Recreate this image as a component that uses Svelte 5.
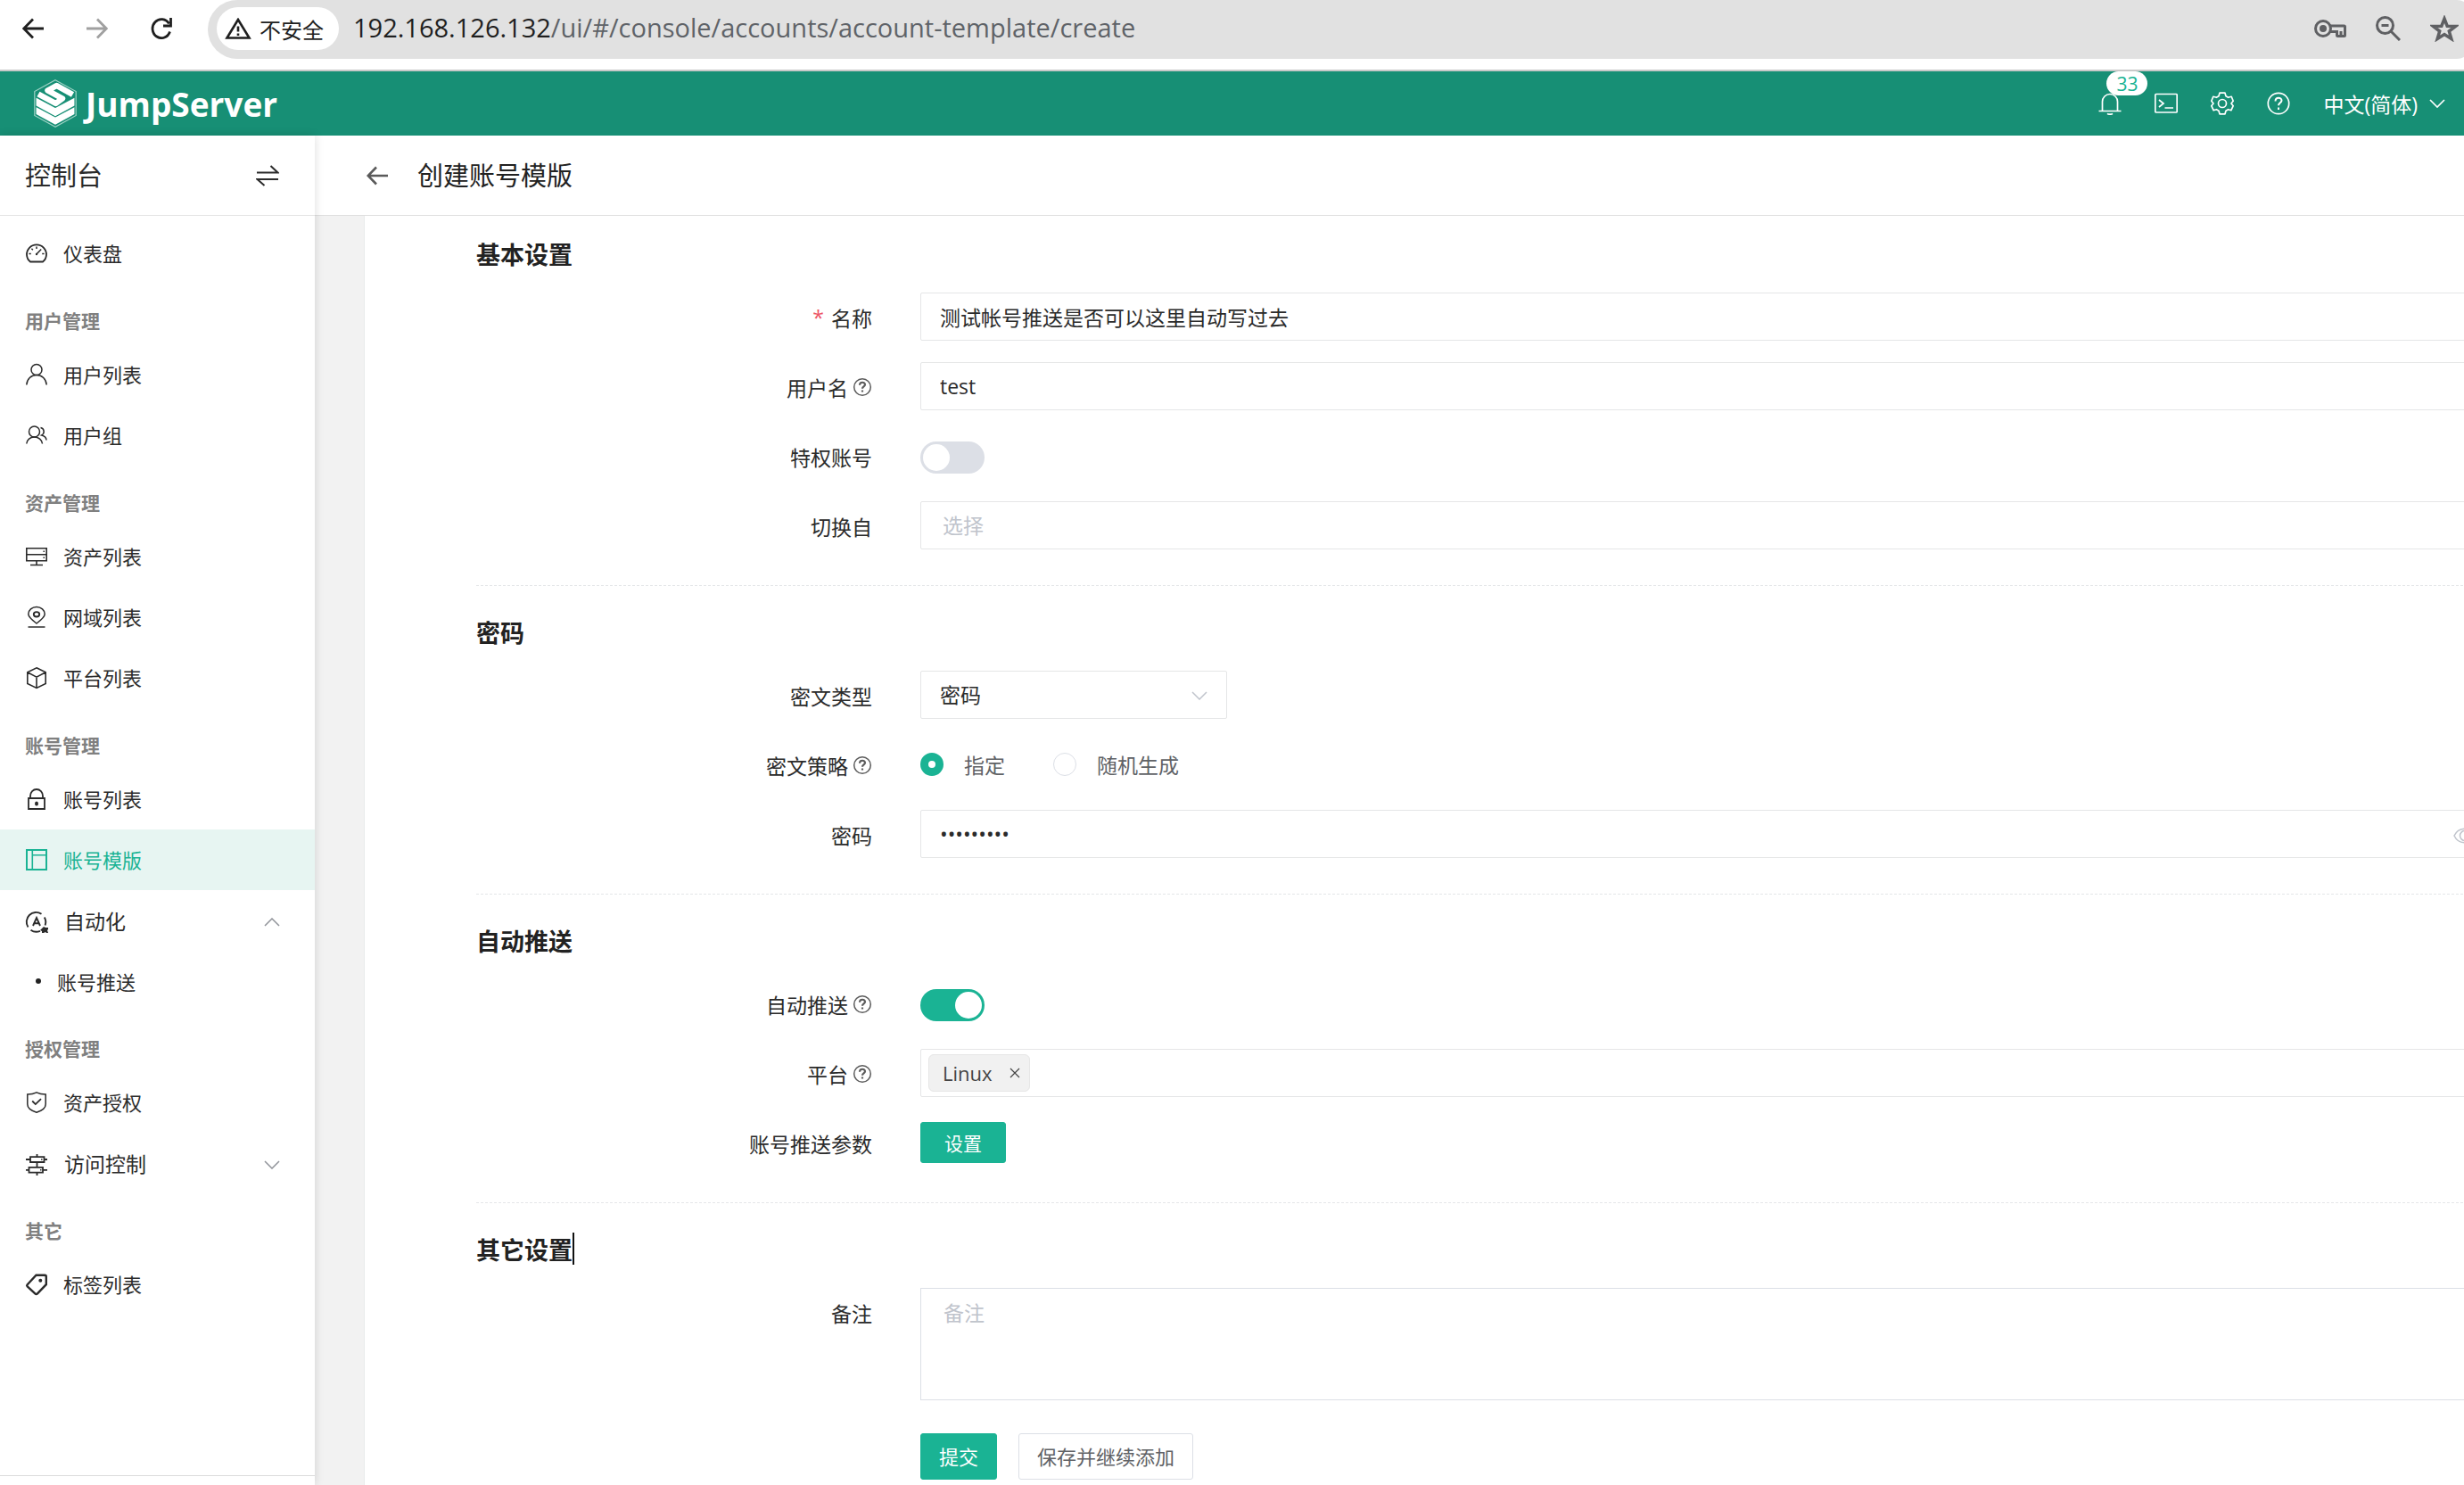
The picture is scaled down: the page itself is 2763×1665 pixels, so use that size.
<script>
  let name = $state('测试帐号推送是否可以这里自动写过去');
  let username = $state('test');
  let privileged = $state(false);
  let suFrom = $state('');
  let secretType = $state('password');
  let strategy = $state('specific');
  let secret = $state('password1');
  let autoPush = $state(true);
  let platforms = $state(['Linux']);
  let comment = $state('');

  const menu = [
    { type: 'item', icon: 'gauge', text: '仪表盘' },
    { type: 'group', text: '用户管理' },
    { type: 'item', icon: 'user', text: '用户列表' },
    { type: 'item', icon: 'users', text: '用户组' },
    { type: 'group', text: '资产管理' },
    { type: 'item', icon: 'server', text: '资产列表' },
    { type: 'item', icon: 'pin', text: '网域列表' },
    { type: 'item', icon: 'cube', text: '平台列表' },
    { type: 'group', text: '账号管理' },
    { type: 'item', icon: 'lock', text: '账号列表' },
    { type: 'item', icon: 'template', text: '账号模版', active: true },
    { type: 'sub', icon: 'auto', text: '自动化', open: true },
    { type: 'child', text: '账号推送' },
    { type: 'group', text: '授权管理' },
    { type: 'item', icon: 'shield', text: '资产授权' },
    { type: 'sub', icon: 'access', text: '访问控制', open: false },
    { type: 'group', text: '其它' },
    { type: 'item', icon: 'tag', text: '标签列表' },
  ];
</script>

{#snippet menuIcon(kind)}
  <svg class="menu-icon" viewBox="0 0 24 24" aria-hidden="true">
    {#if kind === 'gauge'}
      <path d="M5 21.5A11 10.8 0 1 1 19 21.5Z" stroke-width="1.8" />
      <path d="M12 4.5v2.5M6.4 6.8l1.5 1.5M3.4 12.5h2.4M18.2 12.5h2.4M12.4 12.6l4.8-5" />
      <circle cx="12" cy="13" r="1.2" class="solid" />
    {:else if kind === 'user'}
      <circle cx="12" cy="6.5" r="6" />
      <path d="M.8 23.5c.4-6.500 5.200-11 11.200-11s10.800 4.500 11.200 11" />
    {:else if kind === 'users'}
      <circle cx="9.500" cy="8" r="6" />
      <path d="M.8 21.500c.3-4.500 4-7.500 8.700-7.500s8.600 3 9 7.500M16.500 3.500c4 .5 5.200 6.500 1.200 8.500 3 .8 5.200 3 5.300 5.500" />
    {:else if kind === 'server'}
      <path d="M.8 2.800h22.400v14H.8zM.8 9.800h22.400M12 16.800v5.500M5 21.500h14" stroke-width="1.600" />
      <path d="M19.500 6.300h1.500M19.500 13.300h1.500" />
    {:else if kind === 'pin'}
      <path d="M12 19C6 14.500 2.800 11.500 2.800 8.500a9.200 8 0 0 1 18.400 0c0 3-3.200 6-9.200 10.500z" />
      <ellipse cx="12" cy="8.800" rx="3.200" ry="2.700" stroke-width="1.900" />
      <path d="M2.500 23h19" />
    {:else if kind === 'cube'}
      <path d="M12 .8l10.200 5v12.600L12 23.400 1.800 18.400V5.800zM1.800 5.800L12 11.200l10.200-5.400M12 11.200v12.200" stroke-width="1.600" />
    {:else if kind === 'lock'}
      <path d="M3 11h18v12H3zM5 11V8.500a7 7.500 0 0 1 14 0V11" stroke-width="1.800" />
      <ellipse cx="12" cy="17" rx="2" ry="2.500" class="solid" />
    {:else if kind === 'template'}
      <path d="M1 1h22v22H1z" stroke-width="2" />
      <path d="M7.300 1v22M7.300 6.800H23" stroke-width="1.600" />
    {:else if kind === 'auto'}
      <path d="M2.500 17.500A10.700 10.700 0 0 1 17.500 2.800M20.800 6.500a10.700 10.700 0 0 1 .8 9M5.500 20.800a10.700 10.700 0 0 0 10.500 1" stroke-width="1.900" />
      <path d="M8 16l4-9 4 9M9.300 13.200h5.400" stroke-width="1.900" />
      <path d="M16 21l4-4 2 1h3v2l-1 1 1 3h-2l-1-1-2 1h-2v-2z" class="solid" />
    {:else if kind === 'shield'}
      <path d="M12 .8c3.200 1.600 6.500 2.200 10.200 2.200v11c0 4.200-4.500 7.500-10.200 9.200C6.300 21.500 1.800 18.200 1.800 14V3C5.500 3 8.800 2.400 12 .8z" />
      <path d="M7.200 10.500l3.600 3.600 6.200-6" stroke-width="1.800" />
    {:else if kind === 'access'}
      <path d="M5 3.200h15.500v5.800H5zM3.500 14.800H19v5.800H3.500zM0 6h5M20.500 6H24M0 17.800h3.500M19 17.800h5M12.500 0v3.200M12.500 9v5.800M12.500 20.600V24" stroke-width="1.800" />
      <path d="M17 6h1.500M16 17.800h1.500" />
    {:else if kind === 'tag'}
      <path d="M1.500 12.500L11.500 1.800h9.700c1 0 1.600.6 1.600 1.600v8.800L13 22.400c-.8.8-1.900.8-2.700 0L1.700 14.500c-.6-.6-.7-1.400-.2-2z" stroke-width="2.400" />
      <circle cx="16.300" cy="7.800" r="2" class="solid" />
    {/if}
  </svg>
{/snippet}

{#snippet help(text)}
  <svg class="help" viewBox="0 0 22 22" role="img" aria-label={text}>
    <circle cx="11" cy="11" r="9.300" />
    <path d="M8 8.800c0-4 6-4 6-.5 0 2-3 2.200-3 4.400M11 14.500v2" stroke-width="2.200" />
  </svg>
{/snippet}

<div class="window">
  <div class="browser">
    <button class="nav" aria-label="后退">
      <svg viewBox="0 0 24 24"><path d="M24 12H2M12 1.500L1.700 12 12 22.500" /></svg>
    </button>
    <button class="nav off" aria-label="前进">
      <svg viewBox="0 0 24 24"><path d="M0 12h22M12 1.500L22.300 12 12 22.500" /></svg>
    </button>
    <button class="nav" aria-label="刷新">
      <svg viewBox="0 0 24 24"><path d="M21.500 15.500A10 10.500 0 1 1 20.500 6.500M22.500 0v9h-8.500" /></svg>
    </button>
    <div class="address">
      <button class="chip">
        <svg viewBox="0 0 30 24" aria-hidden="true"><path d="M15 2L2.500 22.500h25z" /><path d="M15 9.500v6M15 17.500v2.500" /></svg>
        不安全
      </button>
      <span class="url"><b>192.168.126.132</b>/ui/#/console/accounts/account-template/create</span>
      <div class="tools">
        <button aria-label="密码">
          <svg width="36" height="24" viewBox="0 0 36 24"><circle cx="10" cy="12" r="8.500" /><circle cx="10" cy="12" r="4" class="fill" /><path d="M18 9h15.500c.8 0 1 .4 1 1v9.500c0 .8-.4 1-1 1h-7c-.6 0-1-.3-1-1V15.500H18M30 15v5" /></svg>
        </button>
        <button aria-label="缩放">
          <svg width="28" height="28" viewBox="0 0 28 28"><circle cx="10.500" cy="10.500" r="9" /><path d="M17 17l10 10M6.500 10.500h8" /></svg>
        </button>
        <button aria-label="收藏">
          <svg width="32" height="30" viewBox="0 0 32 30"><path d="M16 4l3.200 8.200 9.300.3-7.200 5.500 2.500 8.500L16 21.600 8.200 26.500l2.500-8.500-7.200-5.500 9.300-.3z" stroke-width="3.500" /></svg>
        </button>
      </div>
    </div>
  </div>

  <header class="topbar">
    <a class="brand" href="#/">
      <svg viewBox="0 0 48 54" aria-hidden="true">
        <path d="M24 .8L47.200 13.500v27L24 53.200.8 40.500v-27z" stroke="#9ed2c5" stroke-width="1.200" />
        <path d="M43.500 17L25.500 7 15.500 12.500 32 21.500 24.500 27 5 16.500" stroke="#fff" stroke-width="6.500" stroke-linejoin="round" />
        <path d="M3.300 22L24 33l20.700-11v7L24 40.500 3.300 29zM3.300 32.500L24 43.500l20.700-11v6L24 50 3.300 38.500z" fill="#fff" />
      </svg>
      <span>JumpServer</span>
    </a>
    <nav class="actions" aria-label="工具">
      <button class="bell" aria-label="消息">
        <svg viewBox="0 0 26 26"><path d="M4.500 21.500V11a8.500 8.500 0 0 1 17 0v10.500M.5 21.500h25M10 24.300c1.500 1.200 4.500 1.200 6 0" /></svg>
        <span class="badge">33</span>
      </button>
      <button aria-label="终端">
        <svg viewBox="0 0 26 26"><rect x=".8" y="2.500" width="24.400" height="20.500" rx="1" /><path d="M5 9l5 4-5 4M11.500 18H21" /></svg>
      </button>
      <button aria-label="设置">
        <svg viewBox="0 0 26 26"><circle cx="13" cy="13" r="4.500" /><path d="M10 1.200h6l1 3.600 2.600 1.500 3.600-1 2 5-2.200 2.700 2.200 2.700-2.300 5-3.300-1-2.600 1.500-1 3.600h-6l-1-3.600-2.600-1.500-3.300 1-2.300-5L3 13 .8 10.300l2-5 3.600 1L9 4.800z" stroke-linejoin="round" /></svg>
      </button>
      <button aria-label="帮助">
        <svg viewBox="0 0 26 26"><circle cx="13" cy="13" r="11.700" /><path d="M9.500 10.500c0-5 7-4.500 7-.8 0 2.500-3.500 2.800-3.500 5.600M13 17.500v2.500" stroke-width="2" /></svg>
      </button>
      <button class="lang">
        中文(简体)
        <svg class="chev" viewBox="0 0 18 10"><path d="M1 1l8 8 8-8" /></svg>
      </button>
    </nav>
  </header>

  <div class="shell">
    <aside class="sidebar">
      <div class="side-head">
        <span>控制台</span>
        <button aria-label="切换视图">
          <svg viewBox="0 0 26 26"><path d="M1 9.500h23.500L16.500 2M25 17H1.500l8 7" /></svg>
        </button>
      </div>
      <nav class="menu" aria-label="控制台">
        {#each menu as m}
          {#if m.type === 'group'}
            <div class="group">{m.text}</div>
          {:else if m.type === 'sub'}
            <button class="entry sub" aria-expanded={m.open}>
              {@render menuIcon(m.icon)}
              <span>{m.text}</span>
              <svg class="arrow" class:open={m.open} viewBox="0 0 18 10"><path d="M1 1l8 8 8-8" /></svg>
            </button>
          {:else if m.type === 'child'}
            <a class="entry child" href="#/push"><i></i>{m.text}</a>
          {:else}
            <a class="entry" class:active={m.active} href="#/menu">
              {@render menuIcon(m.icon)}
              <span>{m.text}</span>
            </a>
          {/if}
        {/each}
      </nav>
      <div class="side-foot"></div>
    </aside>

    <main>
      <div class="page-head">
        <button aria-label="返回">
          <svg viewBox="0 0 24 24"><path d="M24 12H2M11 2.500L1.700 12 11 21.500" /></svg>
        </button>
        <h1>创建账号模版</h1>
      </div>
      <div class="card">
        <form onsubmit={(e) => e.preventDefault()}>
          <section>
            <h2>基本设置</h2>
            <div class="row">
              <label for="name"><em>*</em>名称</label>
              <input id="name" class="box" type="text" bind:value={name} />
            </div>
            <div class="row">
              <label for="username">用户名{@render help('用户名说明')}</label>
              <input id="username" class="box" type="text" bind:value={username} />
            </div>
            <div class="row">
              <label for="privileged">特权账号</label>
              <input id="privileged" class="switch" type="checkbox" bind:checked={privileged} />
            </div>
            <div class="row">
              <label for="su">切换自</label>
              <select id="su" class="box empty" bind:value={suFrom}><option value="">选择</option></select>
            </div>
          </section>

          <section>
            <h2>密码</h2>
            <div class="row">
              <label for="type">密文类型</label>
              <div class="select">
                <select id="type" class="box" bind:value={secretType}><option value="password">密码</option></select>
                <svg class="chev" viewBox="0 0 18 10" aria-hidden="true"><path d="M1 1l8 8 8-8" /></svg>
              </div>
            </div>
            <div class="row">
              <span class="label" id="strategy">密文策略{@render help('密文策略说明')}</span>
              <div class="radios" role="radiogroup" aria-labelledby="strategy">
                <label><input type="radio" name="strategy" value="specific" bind:group={strategy} />指定</label>
                <label><input type="radio" name="strategy" value="random" bind:group={strategy} />随机生成</label>
              </div>
            </div>
            <div class="row">
              <label for="secret">密码</label>
              <div class="secret">
                <input id="secret" class="box" type="password" bind:value={secret} />
                <button type="button" aria-label="显示密码">
                  <svg viewBox="0 0 26 18"><path d="M1 9c5-10.500 19-10.500 24 0-5 10.500-19 10.500-24 0z" /><circle cx="13" cy="9" r="5.500" /></svg>
                </button>
              </div>
            </div>
          </section>

          <section>
            <h2>自动推送</h2>
            <div class="row">
              <label for="push">自动推送{@render help('自动推送说明')}</label>
              <input id="push" class="switch" type="checkbox" bind:checked={autoPush} />
            </div>
            <div class="row">
              <label for="platform">平台{@render help('平台说明')}</label>
              <div class="box tags">
                {#each platforms as p}
                  <span class="tag">{p}
                    <button type="button" aria-label="移除 {p}" onclick={() => (platforms = platforms.filter((x) => x !== p))}>
                      <svg viewBox="0 0 12 12"><path d="M1 1l10 10M11 1L1 11" /></svg>
                    </button>
                  </span>
                {/each}
                <input id="platform" type="text" />
              </div>
            </div>
            <div class="row">
              <label for="params">账号推送参数</label>
              <button id="params" type="button" class="btn primary small">设置</button>
            </div>
          </section>

          <section>
            <h2>其它设置<span class="caret"></span></h2>
            <div class="row">
              <label for="comment">备注</label>
              <textarea id="comment" placeholder="备注" bind:value={comment}></textarea>
            </div>
            <div class="row submit">
              <div class="buttons">
                <button type="submit" class="btn primary">提交</button>
                <button type="button" class="btn">保存并继续添加</button>
              </div>
            </div>
          </section>
        </form>
      </div>
    </main>
  </div>
</div>

<style>
  :global(body) {
    margin: 0;
    background: #fff;
  }
  .window {
    display: flex;
    flex-direction: column;
    height: 100vh;
    overflow: hidden;
    font-family: 'Open Sans', 'Noto Sans CJK SC', sans-serif;
    font-size: 23px;
    color: #2b2b2b;
  }
  .window :is(button, input, select, textarea) {
    font: inherit;
    color: inherit;
    box-sizing: border-box;
    margin: 0;
  }
  button {
    padding: 0;
    border: 0;
    background: none;
    display: flex;
    align-items: center;
    cursor: pointer;
  }
  a {
    color: inherit;
    text-decoration: none;
  }
  svg {
    display: block;
    flex: none;
    fill: none;
    stroke: currentColor;
    stroke-width: 1.5;
  }

  /* browser toolbar */
  .browser {
    display: flex;
    align-items: flex-start;
    flex: none;
    height: 78px;
    padding-left: 25px;
    border-bottom: 2px solid #c9c9c9;
    overflow: hidden;
  }
  .window .nav {
    flex: none;
    height: 64px;
    margin-right: 48px;
    color: #1f1f1f;
  }
  .nav svg {
    width: 24px;
    height: 24px;
    stroke-width: 2.8;
  }
  .window .nav.off {
    color: #a0a0a0;
  }
  .window .nav:nth-child(3) {
    margin-right: 40px;
  }
  .address {
    flex: 1;
    display: flex;
    align-items: center;
    box-sizing: border-box;
    height: 66px;
    margin-right: -8px;
    padding: 0 14px 2px 10px;
    border-radius: 33px 16px 16px 33px;
    background: #e1e1e1;
  }
  .window .chip {
    flex: none;
    gap: 9px;
    height: 48px;
    padding: 0 17px 0 9px;
    border-radius: 24px;
    background: #fff;
    font-size: 24px;
    color: #1f1f1f;
  }
  .chip svg {
    width: 30px;
    height: 24px;
    stroke-width: 2.6;
  }
  .url {
    flex: 1;
    margin-left: 16px;
    padding-bottom: 2px;
    font-size: 29px;
    line-height: 62px;
    white-space: nowrap;
    color: #5f6368;
  }
  .url b {
    font-weight: 400;
    color: #1f1f1f;
  }
  .tools {
    display: flex;
    align-items: center;
    gap: 33px;
    color: #5f6063;
  }
  .tools svg {
    stroke-width: 3;
  }
  .tools .fill {
    fill: currentColor;
    stroke: none;
  }

  /* product header */
  .topbar {
    display: flex;
    justify-content: space-between;
    flex: none;
    height: 72px;
    padding: 0 21px 0 38px;
    background: #178f75;
    color: #fff;
  }
  .brand {
    display: flex;
    align-items: center;
    gap: 10px;
    font-size: 37px;
    font-weight: 700;
  }
  .brand svg {
    width: 48px;
    height: 54px;
  }
  .actions {
    display: flex;
    align-items: center;
    gap: 37px;
  }
  .actions svg {
    width: 26px;
    height: 26px;
    stroke-width: 1.7;
  }
  .bell {
    position: relative;
  }
  .badge {
    position: absolute;
    left: 9px;
    top: -23px;
    width: 46px;
    height: 27px;
    border-radius: 14px;
    background: #fff;
    color: #1ab394;
    font-size: 21px;
    line-height: 28px;
    text-align: center;
  }
  .lang {
    gap: 13px;
  }
  .actions .chev {
    width: 18px;
    height: 10px;
  }

  /* sidebar */
  .shell {
    flex: 1;
    display: flex;
    min-height: 0;
  }
  .sidebar {
    position: relative;
    flex: none;
    display: flex;
    flex-direction: column;
    width: 353px;
    background: #fff;
    box-shadow: 0 0 10px rgba(0, 0, 0, 0.14);
  }
  .side-head {
    display: flex;
    justify-content: space-between;
    align-items: center;
    height: 89px;
    padding: 0 40px 0 28px;
    border-bottom: 1px solid #e4e4e4;
    font-size: 29px;
  }
  .side-head span,
  h1,
  .entry span {
    padding-bottom: 3px;
  }
  .side-head svg {
    width: 26px;
    height: 26px;
    stroke-width: 2;
  }
  .menu {
    flex: 1;
    padding-top: 8px;
  }
  .group {
    height: 68px;
    box-sizing: border-box;
    padding: 10px 0 0 28px;
    font-size: 21px;
    font-weight: 700;
    line-height: 64px;
    color: #808080;
  }
  .window .entry {
    display: flex;
    align-items: center;
    gap: 18px;
    box-sizing: border-box;
    width: 100%;
    height: 68px;
    padding: 0 39px 0 29px;
    font-size: 22px;
  }
  .window .entry.active {
    background: #e7f5f2;
    color: #1ab394;
  }
  .window .sub {
    gap: 19px;
    padding-top: 3px;
    font-size: 23px;
  }
  .menu-icon {
    width: 24px;
    height: 24px;
    overflow: visible;
  }
  .solid {
    fill: currentColor;
    stroke: none;
  }
  .arrow {
    width: 18px;
    height: 10px;
    margin-left: auto;
    color: #909399;
  }
  .arrow.open {
    transform: rotate(180deg);
  }
  .window .child {
    padding-left: 40px;
  }
  .child i {
    width: 6px;
    height: 6px;
    border-radius: 3px;
    background: #222;
  }
  .side-foot {
    height: 10px;
    border-top: 1px solid #dcdcdc;
  }

  /* page */
  main {
    flex: 1;
    min-width: 0;
    display: flex;
    flex-direction: column;
    overflow: hidden;
    background: #f2f2f2;
  }
  .page-head {
    display: flex;
    align-items: center;
    gap: 33px;
    flex: none;
    height: 89px;
    padding-left: 58px;
    border-bottom: 1px solid #dfdfdf;
    background: #fff;
    color: #222;
  }
  .page-head svg {
    width: 24px;
    height: 24px;
    stroke-width: 2.6;
    color: #5a5a5a;
  }
  h1 {
    margin: 0;
    font-size: 29px;
    font-weight: 400;
  }
  .card {
    flex: 1;
    margin: 0 -24px 0 55px;
    padding-left: 125px;
    border-left: 1px solid #e9ebec;
    background: #fff;
  }
  section + section {
    border-top: 1px dashed #e4e6e8;
  }
  section {
    padding-bottom: 16px;
  }
  h2 {
    display: flex;
    align-items: center;
    height: 36px;
    margin: 0;
    padding: 24px 0 26px;
    font-size: 27px;
    font-weight: 700;
    color: #222;
  }
  section + section h2 {
    padding-top: 33px;
  }
  .caret {
    width: 2px;
    height: 36px;
    background: #111;
  }
  .row {
    display: grid;
    grid-template-columns: 444px 1fr;
    column-gap: 54px;
    align-items: center;
    min-height: 54px;
    margin-bottom: 24px;
  }
  .row > label,
  .row > .label {
    display: flex;
    align-items: center;
    justify-content: flex-end;
    align-self: start;
    height: 54px;
    padding-top: 2px;
    box-sizing: border-box;
  }
  em {
    margin-right: 8px;
    font-style: normal;
    color: #ed5565;
  }
  .help {
    width: 22px;
    height: 22px;
    margin-left: 5px;
    color: #5c5c5c;
  }
  .window .box {
    width: 100%;
    height: 54px;
    padding: 0 21px;
    border: 1px solid #e5e6e7;
    border-radius: 2px;
    background: #fff;
    outline: 0;
    appearance: none;
  }
  .window .box.empty {
    padding-left: 24px;
    color: #c0c4cc;
  }
  .select {
    position: relative;
    width: 344px;
  }
  .select .chev {
    position: absolute;
    right: 22px;
    top: 23px;
    width: 18px;
    height: 10px;
    color: #c0c4cc;
    pointer-events: none;
  }
  .window .switch {
    appearance: none;
    width: 72px;
    height: 36px;
    margin-top: 3px;
    padding: 3px;
    border-radius: 18px;
    background: #dcdfe6;
  }
  .switch::before {
    content: '';
    display: block;
    width: 30px;
    height: 30px;
    border-radius: 15px;
    background: #fff;
  }
  .window .switch:checked {
    background: #1ab394;
  }
  .switch:checked::before {
    margin-left: auto;
  }
  .radios {
    display: flex;
    gap: 54px;
    color: #606266;
  }
  .radios label {
    display: flex;
    align-items: center;
    gap: 23px;
  }
  .radios input {
    appearance: none;
    width: 26px;
    height: 26px;
    border: 1px solid #dcdfe6;
    border-radius: 13px;
    background: #fff;
  }
  .radios input:checked {
    border: 9px solid #1ab394;
  }
  .secret {
    position: relative;
  }
  .secret button {
    position: absolute;
    right: 10px;
    top: 20px;
    color: #c0c4cc;
  }
  .secret svg {
    width: 26px;
    height: 18px;
  }
  .window .tags {
    display: flex;
    align-items: center;
    gap: 12px;
    box-sizing: border-box;
    padding: 0 8px;
  }
  .tags input {
    flex: 1;
    border: 0;
    outline: 0;
    background: none;
  }
  .tag {
    display: flex;
    align-items: center;
    gap: 19px;
    height: 40px;
    padding: 0 10px 0 15px;
    border: 1px solid #e6e6e6;
    border-radius: 6px;
    background: #f1f1f1;
    color: #444;
    font-size: 22px;
  }
  .tag svg {
    width: 12px;
    height: 12px;
    stroke-width: 1.2;
  }
  textarea {
    width: 100%;
    height: 126px;
    padding: 9px 25px;
    border: 1px solid #dcdfe6;
    outline: 0;
    resize: none;
    line-height: 34px;
  }
  textarea::placeholder {
    color: #c0c4cc;
  }
  .window .btn {
    height: 52px;
    padding: 0 20px 2px;
    border: 1px solid #dcdfe6;
    border-radius: 3px;
    background: #fff;
    color: #606266;
    font-size: 22px;
  }
  .window .btn.primary {
    border-color: #1ab394;
    background: #1ab394;
    color: #fff;
  }
  .window .btn.small {
    justify-self: start;
    height: 46px;
    padding: 0 26px;
    font-size: 21px;
  }
  .submit {
    margin-top: 36px;
  }
  .buttons {
    grid-column: 2;
    display: flex;
    gap: 24px;
  }
</style>
